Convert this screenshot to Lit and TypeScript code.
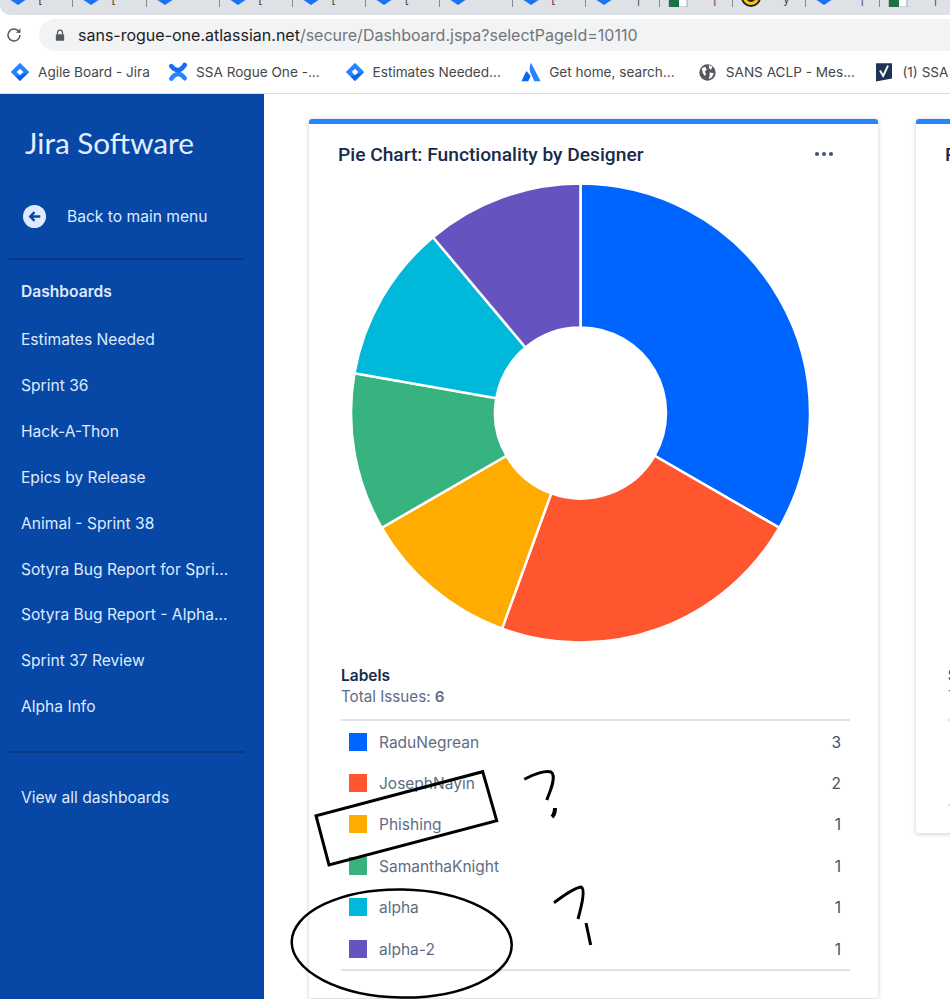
import { LitElement, css, html, svg } from 'lit';
import { customElement } from 'lit/decorators.js';

type Row = { label: string; count: number; color: string };

const designers: Row[] = [
  { label: 'RaduNegrean', count: 3, color: '#0065ff' },
  { label: 'JosephNayin', count: 2, color: '#ff5630' },
  { label: 'Phishing', count: 1, color: '#ffab00' },
  { label: 'SamanthaKnight', count: 1, color: '#36b37e' },
  { label: 'alpha', count: 1, color: '#00b8d9' },
  { label: 'alpha-2', count: 1, color: '#6554c0' },
];

const statuses: Row[] = [
  { label: 'Open', count: 1, color: '#0065ff' },
  { label: 'Closed', count: 1, color: '#ff5630' },
];

const dashboards = [
  'Estimates Needed',
  'Sprint 36',
  'Hack-A-Thon',
  'Epics by Release',
  'Animal - Sprint 38',
  'Sotyra Bug Report for Spri...',
  'Sotyra Bug Report - Alpha...',
  'Sprint 37 Review',
  'Alpha Info',
];

const jiraIcon = html`<svg viewBox="0 0 24 24" width="20" height="20">
  <path d="M12 1.500 22.500 12 12 22.500 1.500 12Z" fill="#2684ff" stroke="#2684ff" stroke-linejoin="round" />
  <path d="M12 16 22.500 12 12 22.500 7 17.500Z" fill="#0f62e0" />
  <path d="M12 8 16 12 12 16 8 12Z" fill="#fff" />
</svg>`;

const confluenceIcon = html`<svg viewBox="0 0 24 24" width="20" height="20" fill="none" stroke-width="5.500" stroke-linecap="round">
  <path d="M4 5C9 11.500 15 11.500 20 3.500" stroke="#1a6cf0" />
  <path d="M4 20C9 12.500 15 12.500 20 19.500" stroke="#2684ff" />
</svg>`;

const atlassianIcon = html`<svg viewBox="0 0 24 24" width="20" height="20">
  <path d="M12 1C9.600 5.800 10 10 12 14L16 23H23.500Z" fill="#2684ff" />
  <path d="M7 11.500C6.600 11 6.200 11.100 5.900 11.700L.5 23H8.700L11.500 17C10.300 15 8.600 13.200 7 11.500Z" fill="#0b66ee" />
</svg>`;

const globeIcon = html`<svg viewBox="0 0 24 24" width="17" height="17">
  <circle cx="12" cy="12" r="11.500" fill="#55585e" />
  <path d="M4 6 9 4 11 8 8 11 10 14 8 17 5 12ZM14 1.500 19 4 17 8 14 6ZM15 12 21 13 18 19 14 21 15 16Z" fill="#fff" />
</svg>`;

const checkIcon = html`<svg viewBox="0 0 20 24" width="16" height="20">
  <path d="M0 1H20V20L0 24Z" fill="#1c3557" />
  <path d="M5 10 9 17 15 4" fill="none" stroke="#fff" stroke-width="2.400" />
</svg>`;

const blue = '#1a73f0';
const green = '#1e7145';

// offset = space between the favicon and the sliver of title still in view
const tabs = [
  { color: blue, mark: '[', shape: 'diamond', offset: 10 },
  { color: blue, mark: '[', shape: 'diamond', offset: 10 },
  { color: blue, mark: '', shape: 'diamond', offset: 0 },
  { color: blue, mark: '[', shape: 'diamond', offset: 10 },
  { color: blue, mark: '[', shape: 'diamond', offset: 10 },
  { color: blue, mark: '[', shape: 'diamond', offset: 10 },
  { color: blue, mark: '', shape: 'diamond', offset: 0 },
  { color: blue, mark: '[', shape: 'diamond', offset: 10 },
  { color: blue, mark: '|', shape: 'diamond', offset: 22 },
  { color: green, mark: '|', shape: 'sheet', offset: 25 },
  { color: '#f5c518', mark: 'y', shape: 'smile', offset: 22 },
  { color: blue, mark: '|', shape: 'diamond', offset: 26 },
  { color: green, mark: '|', shape: 'sheet', offset: 26 },
];

const bookmarks = [
  { icon: jiraIcon, label: 'Agile Board - Jira' },
  { icon: confluenceIcon, label: 'SSA Rogue One -...' },
  { icon: jiraIcon, label: 'Estimates Needed...' },
  { icon: atlassianIcon, label: 'Get home, search...' },
  { icon: globeIcon, label: 'SANS ACLP - Mes...' },
  { icon: checkIcon, label: '(1) SSA' },
];

// donut slice from angle a to b, clockwise from twelve o'clock
function slice(a: number, b: number, r: number, inner: number) {
  const pt = (t: number, rad: number) =>
    `${(235.5 + rad * Math.sin(t)).toFixed(2)} ${(235 - rad * Math.cos(t)).toFixed(2)}`;
  const large = b - a > Math.PI ? 1 : 0;
  return `M${pt(a, r)}A${r} ${r} 0 ${large} 1 ${pt(b, r)}L${pt(b, inner)}A${inner} ${inner} 0 ${large} 0 ${pt(a, inner)}Z`;
}

@customElement('pie-card')
export class PieCard extends LitElement {
  static override properties = {
    heading: {},
    legend: {},
    total: {},
    rows: { attribute: false },
  };

  heading = '';
  legend = '';
  total = 0;
  rows: Row[] = [];

  static override styles = css`
    :host {
      display: block;
      flex: none;
      width: 569px;
      background: #fff;
      border-top: 5px solid #2684ff;
      border-radius: 3px;
      box-shadow: 0 1px 5px rgba(9, 30, 66, 0.22);
      padding-bottom: 27px;
    }

    .head {
      height: 54px;
      padding: 6px 45px 0 29px;
      display: flex;
      align-items: center;
      justify-content: space-between;
      box-sizing: border-box;
      color: #172b4d;
    }

    .head h2 {
      margin: 0;
      font: 500 19.200px Roboto, sans-serif;
    }

    .dots {
      display: flex;
      gap: 2.500px;
    }

    .dots i {
      width: 4.500px;
      height: 4.500px;
      border-radius: 50%;
      background: #42526e;
    }

    .pie {
      display: block;
      margin-left: 36px;
    }

    .legend {
      margin: 18px 28px 0 32px;
    }

    .legend h3 {
      margin: 0;
      font: 600 15.500px/20px Inter, sans-serif;
      color: #172b4d;
    }

    .total {
      font: 400 15.200px/21px Inter, sans-serif;
      color: #5e6c84;
      padding-bottom: 12px;
      border-bottom: 2px solid #dfe1e6;
    }

    .total b {
      font-weight: 600;
    }

    .rows {
      border-bottom: 2px solid #dfe1e6;
    }

    .row {
      height: 41.400px;
      padding: 0 9px 0 8px;
      display: flex;
      align-items: center;
      font: 400 15.500px Inter, sans-serif;
      color: #5e6c84;
    }

    .swatch {
      width: 18px;
      height: 18px;
      margin-right: 12px;
    }

    .label {
      flex: 1;
      padding-top: 1px;
    }

    .count {
      padding-top: 1px;
      color: #42526e;
    }
  `;

  protected override render() {
    const sum = this.rows.reduce((n, r) => n + r.count, 0);
    let at = 0;
    return html`
      <div class="head">
        <h2>${this.heading}</h2>
        <div class="dots"><i></i><i></i><i></i></div>
      </div>
      <svg class="pie" viewBox="0 0 470 470" width="470" height="470">
        ${this.rows.map((r) => {
          const from = at;
          at += (r.count / sum) * Math.PI * 2;
          return svg`<path d=${slice(from, at, 229.5, 85.5)} fill=${r.color} stroke="#fff" stroke-width="2.500" />`;
        })}
      </svg>
      <div class="legend">
        <h3>${this.legend}</h3>
        <div class="total">Total Issues: <b>${this.total}</b></div>
        <div class="rows">
          ${this.rows.map(
            (r) => html`<div class="row">
              <span class="swatch" style="background:${r.color}"></span>
              <span class="label">${r.label}</span>
              <span class="count">${r.count}</span>
            </div>`,
          )}
        </div>
      </div>
    `;
  }
}

@customElement('app-root')
export class AppRoot extends LitElement {
  static override styles = css`
    :host {
      display: block;
    }

    .page {
      position: relative;
      width: 950px;
      height: 999px;
      overflow: hidden;
      background: #fff;
      font-family: Inter, sans-serif;
    }

    .tabs {
      height: 15px;
      background: #dee1e6;
      border-bottom-left-radius: 10px;
      display: flex;
    }

    .tab {
      flex: none;
      width: 73.300px;
      height: 7px;
      box-sizing: border-box;
      border-right: 1px solid #85888d;
      overflow: hidden;
      display: flex;
      padding-left: 8px;
      font: 400 12px/12px Inter, sans-serif;
      color: #45474a;
    }

    .tab svg {
      flex: none;
      margin-top: -11px;
    }

    .tab span {
      margin-top: -7px;
    }

    .address {
      height: 36px;
      padding: 4px 0 0 39px;
      box-sizing: border-box;
      position: relative;
    }

    .reload {
      position: absolute;
      left: 5px;
      top: 11px;
    }

    .pill {
      height: 32px;
      background: #f1f3f4;
      border-radius: 16px 0 0 16px;
      padding-left: 16px;
      display: flex;
      align-items: center;
      gap: 13px;
      font: 400 16px Inter, sans-serif;
      color: #202124;
    }

    .pill em {
      font-style: normal;
      color: #72757a;
    }

    .bookmarks {
      height: 43px;
      padding-left: 10px;
      box-sizing: border-box;
      border-bottom: 1px solid #dadce0;
      display: flex;
      align-items: center;
    }

    .bookmark {
      flex: none;
      width: 176.600px;
      display: flex;
      align-items: center;
      gap: 8px;
      font: 400 13.600px Inter, sans-serif;
      color: #45474a;
      white-space: nowrap;
    }

    .bookmark:first-child {
      width: 158px;
    }

    .bookmark .glyph {
      flex: none;
      width: 20px;
      display: flex;
      justify-content: center;
    }

    .body {
      display: flex;
      height: 905px;
    }

    .side {
      flex: none;
      width: 264px;
      background: #0747a6;
      color: #deebff;
      font-size: 15.600px;
      box-sizing: border-box;
      padding: 0 19px 0 8px;
    }

    .brand {
      height: 100px;
      padding: 29px 0 0 17px;
      box-sizing: border-box;
      font: 400 29.700px/40px Lato, sans-serif;
      color: #e4edff;
    }

    .back {
      height: 44px;
      padding-left: 15px;
      display: flex;
      align-items: center;
      gap: 21px;
    }

    .spacer {
      height: 20px;
    }

    .rule {
      height: 2px;
      background: #063a86;
    }

    .side h4 {
      margin: 0 0 -1px;
      height: 58px;
      padding: 5px 0 0 13px;
      box-sizing: border-box;
      display: flex;
      align-items: center;
      font-size: 15.600px;
      font-weight: 600;
    }

    .item {
      height: 45.850px;
      padding-left: 13px;
      display: flex;
      align-items: center;
      white-space: nowrap;
    }

    .list {
      margin-bottom: 21.350px;
    }

    .view-all {
      margin-top: 22px;
    }

    .main {
      flex: 1;
      min-width: 0;
      overflow: hidden;
      padding: 25px 0 0 45px;
      display: flex;
      align-items: flex-start;
      gap: 38px;
    }

    .ink {
      position: absolute;
      inset: 0;
      pointer-events: none;
    }
  `;

  private tabIcon(shape: string, color: string) {
    if (shape === 'sheet') {
      return html`<svg width="20" height="20" viewBox="0 0 20 20">
        <rect x="1" y="2" width="18" height="16" fill="#fff" stroke="#9aa" />
        <rect x="1" y="2" width="10" height="16" fill=${color} />
      </svg>`;
    }
    if (shape === 'smile') {
      return html`<svg width="20" height="20" viewBox="0 0 20 20">
        <circle cx="10" cy="8" r="9" fill=${color} stroke="#222" stroke-width="2" />
        <path d="M5 10Q10 16 15 10Z" fill="#222" />
      </svg>`;
    }
    return html`<svg width="20" height="20" viewBox="0 0 20 20"><path d="M10 1 19 10 10 16 1 10Z" fill=${color} /></svg>`;
  }

  protected override render() {
    return html`
      <div class="page">
        <div class="tabs">
          ${tabs.map(
            (t) => html`<div class="tab">
              ${this.tabIcon(t.shape, t.color)}<span style="margin-left:${t.offset}px">${t.mark}</span>
            </div>`,
          )}
        </div>
        <div class="address">
          <svg class="reload" viewBox="0 0 24 24" width="18" height="18" fill="none" stroke="#55585c" stroke-width="2">
            <path d="M20 12a8 8 0 1 1-2.400-5.700L20 8.500" />
            <path d="M20.500 3V9H14.500" fill="#55585c" stroke="none" />
          </svg>
          <div class="pill">
            <svg viewBox="0 0 12 14" width="10" height="12">
              <path d="M3 6V4a3 3 0 0 1 6 0v2" fill="none" stroke="#55585c" stroke-width="1.500" />
              <rect x="1" y="6" width="10" height="8" rx="1" fill="#55585c" />
            </svg>
            <span>sans-rogue-one.atlassian.net<em>/secure/Dashboard.jspa?selectPageId=10110</em></span>
          </div>
        </div>
        <div class="bookmarks">
          ${bookmarks.map(
            (b) => html`<div class="bookmark"><span class="glyph">${b.icon}</span><span>${b.label}</span></div>`,
          )}
        </div>
        <div class="body">
          <nav class="side">
            <div class="brand">Jira Software</div>
            <div class="back">
              <svg viewBox="0 0 24 24" width="23" height="23">
                <circle cx="12" cy="12" r="12" fill="#deebff" />
                <path d="M18 12H8M12 7.500 7.500 12 12 16.500" fill="none" stroke="#0747a6" stroke-width="2.400" />
              </svg>
              <span>Back to main menu</span>
            </div>
            <div class="spacer"></div>
            <div class="rule"></div>
            <h4>Dashboards</h4>
            <div class="list">${dashboards.map((d) => html`<div class="item">${d}</div>`)}</div>
            <div class="rule"></div>
            <div class="item view-all">View all dashboards</div>
          </nav>
          <main class="main">
            <pie-card
              heading="Pie Chart: Functionality by Designer"
              legend="Labels"
              total="6"
              .rows=${designers}
            ></pie-card>
            <pie-card heading="Pie Chart: Status" legend="Status" total="2" .rows=${statuses}></pie-card>
          </main>
        </div>
        <svg class="ink" viewBox="0 0 950 999" width="950" height="999" fill="none" stroke="#000">
          <path d="M482.700 771.700 496.700 820.700 329 865 316 815.700Z" stroke-width="3" />
          <ellipse cx="401.700" cy="943.500" rx="110" ry="54" transform="rotate(1 401.700 943.500)" stroke-width="2.500" />
          <path d="M524.300 779.300C534 774 546 770 551 772 557 776 550 792 546.700 800" stroke-width="3" />
          <path d="M555 808C555 812 554 815 552 817" stroke-width="4" />
          <path d="M554 902.700C562 897 573 888 581 887 586 889 581 908 578 919" stroke-width="3" />
          <path d="M586 923 590.700 945" stroke-width="3" />
        </svg>
      </div>
    `;
  }
}
